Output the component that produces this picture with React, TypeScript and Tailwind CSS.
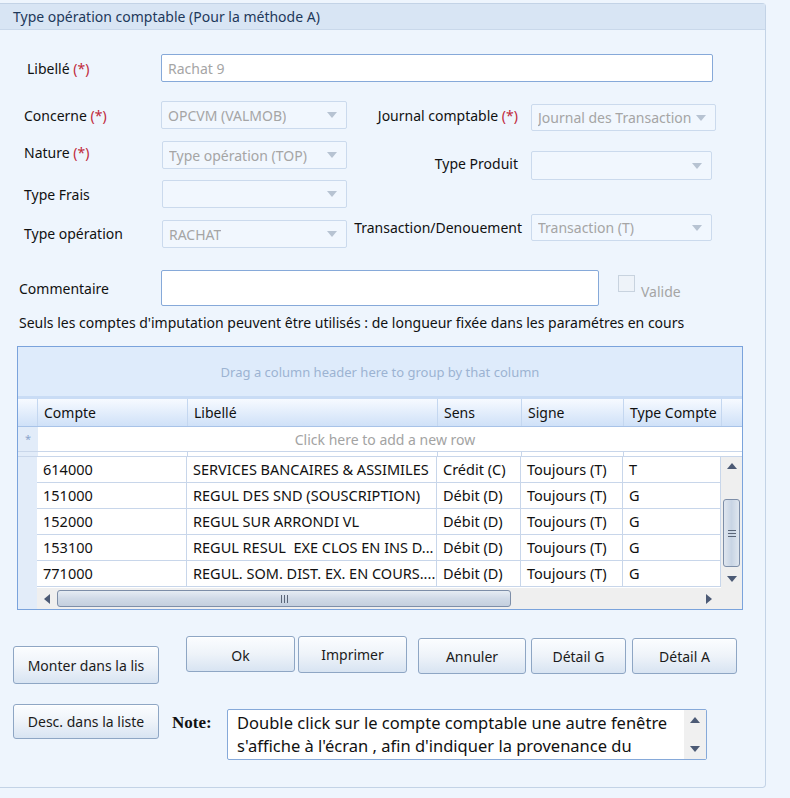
import React from 'react'

const font = { fontFamily: '"Noto Sans", "Open Sans", sans-serif' }

function Arrow({ dir, className }: { dir: 'up' | 'down' | 'left' | 'right'; className?: string }) {
  const pts = {
    up: '0,6 5,0 10,6',
    down: '0,0 10,0 5,6',
    left: '6,0 6,10 0,5',
    right: '0,0 6,5 0,10',
  }[dir]
  const vb = dir === 'up' || dir === 'down' ? '0 0 10 6' : '0 0 6 10'
  const size = dir === 'up' || dir === 'down' ? 'w-[10px] h-[6px]' : 'w-[6px] h-[10px]'
  return (
    <svg viewBox={vb} className={`${size} ${className ?? ''}`}>
      <polygon points={pts} fill="currentColor" />
    </svg>
  )
}

function Select({ value, className }: { value?: string; className: string }) {
  return (
    <div
      className={`flex items-center justify-between rounded-[2px] border border-[#cbdaed] bg-[#f1f7fe] pl-[6px] pr-[9px] text-[14px] text-[#a5a5a5] ${className}`}
    >
      <span className="truncate">{value}</span>
      <Arrow dir="down" className="w-[9px] h-[5px] text-[#b7c3d2] shrink-0" />
    </div>
  )
}

function Req() {
  return <span className="text-[#c0283a]"> (*)</span>
}

function Btn({ label, className }: { label: string; className: string }) {
  return (
    <button
      className={`relative flex items-center justify-center rounded-[3px] border border-[#8ea6c4] bg-gradient-to-b from-[#fbfdff] via-[#eef3f9] to-[#d8e4f2] text-[14px] text-[#1b1b1b] shadow-[inset_0_1px_0_#ffffff] ${className}`}
    >
      {label}
    </button>
  )
}

const cols = [
  { name: 'Compte', w: 'w-[150px]' },
  { name: 'Libellé', w: 'w-[250px]' },
  { name: 'Sens', w: 'w-[84px]' },
  { name: 'Signe', w: 'w-[102px]' },
  { name: 'Type Compte', w: 'w-[98px]' },
]

const rows = [
  ['614000', 'SERVICES BANCAIRES & ASSIMILES', 'Crédit (C)', 'Toujours (T)', 'T'],
  ['151000', 'REGUL DES SND (SOUSCRIPTION)', 'Débit (D)', 'Toujours (T)', 'G'],
  ['152000', 'REGUL SUR ARRONDI VL', 'Débit (D)', 'Toujours (T)', 'G'],
  ['153100', 'REGUL RESUL  EXE CLOS EN INS D...', 'Débit (D)', 'Toujours (T)', 'G'],
  ['771000', 'REGUL. SOM. DIST. EX. EN COURS....', 'Débit (D)', 'Toujours (T)', 'G'],
]

function Grid() {
  return (
    <div className="ml-[17px] mt-[13px] flex h-[264px] w-[726px] flex-col border border-[#7aa3dc] bg-white">
      <div className="flex h-[52px] shrink-0 items-center justify-center border-b-[3px] border-[#c9dcf5] bg-[#deebfb] pt-[2px] text-[13px] text-[#9cb3d2]">
        Drag a column header here to group by that column
      </div>
      <div className="flex h-[28px] shrink-0 border-b border-[#a8c3e8] bg-gradient-to-b from-[#f7faff] to-[#cfe1f8] text-[14px] text-[#111]">
        <div className="w-[20px] border-r border-[#c4d7f0]" />
        {cols.map((c) => (
          <div key={c.name} className={`${c.w} flex items-center border-r border-[#c4d7f0] pl-[6px]`}>
            {c.name}
          </div>
        ))}
      </div>
      <div className="flex h-[25px] shrink-0 border-b border-[#c8d6ea]">
        <div className="flex w-[20px] items-center justify-center bg-[#e2ecf9] text-[11px] text-[#8aa4cc]">*</div>
        <div className="flex flex-1 items-center justify-center pr-[10px] text-[14px] text-[#a3a3a3]">
          Click here to add a new row
        </div>
      </div>
      <div className="flex h-[5px] shrink-0 border-b border-[#c8d6ea]">
        <div className="w-[20px] bg-[#e2ecf9]" />
        <div className="w-[150px] border-r border-[#c8d6ea]" />
        <div className="w-[250px] border-r border-[#c8d6ea]" />
        <div className="w-[84px] border-r border-[#c8d6ea]" />
        <div className="w-[102px] border-r border-[#c8d6ea]" />
      </div>
      <div className="flex flex-1">
        <div className="w-[20px] bg-[#e2ecf9]" />
        <div className="flex flex-1 flex-col">
          <div className="flex flex-1">
            <div className="flex w-[684px] flex-col">
              {rows.map((r) => (
                <div key={r[0]} className="flex h-[26px] border-b border-[#c8d6ea] text-[14.5px] text-[#111]">
                  {r.map((v, i) => (
                    <div
                      key={i}
                      className={`${cols[i].w} flex items-center overflow-hidden whitespace-pre border-r border-[#c8d6ea] pl-[6px]`}
                    >
                      {v}
                    </div>
                  ))}
                </div>
              ))}
            </div>
            <div className="flex w-[21px] flex-col items-center bg-[#efefef] py-[6px]">
              <Arrow dir="up" className="text-[#4c5a75]" />
              <div className="mt-[30px] flex h-[68px] w-[17px] items-center justify-center rounded-[3px] border border-[#7d8ea8] bg-gradient-to-r from-[#dfe6ef] via-[#c8d4e4] to-[#dfe6ef]">
                <div className="flex flex-col gap-[2px]">
                  <div className="h-px w-[8px] bg-[#5b6678]" />
                  <div className="h-px w-[8px] bg-[#5b6678]" />
                  <div className="h-px w-[8px] bg-[#5b6678]" />
                </div>
              </div>
              <div className="flex-1" />
              <Arrow dir="down" className="text-[#4c5a75]" />
            </div>
          </div>
          <div className="flex h-[21px] shrink-0 items-center bg-[#efefef]">
            <Arrow dir="left" className="ml-[7px] text-[#4c5a75]" />
            <div className="ml-[7px] flex h-[17px] w-[454px] items-center justify-center rounded-[3px] border border-[#7d8ea8] bg-gradient-to-b from-[#e6ecf3] via-[#d0dae7] to-[#c4cfde]">
              <div className="flex gap-[2px]">
                <div className="h-[8px] w-px bg-[#5b6678]" />
                <div className="h-[8px] w-px bg-[#5b6678]" />
                <div className="h-[8px] w-px bg-[#5b6678]" />
              </div>
            </div>
            <div className="flex-1" />
            <Arrow dir="right" className="mr-[30px] text-[#4c5a75]" />
          </div>
        </div>
      </div>
    </div>
  )
}

export default function App() {
  return (
    <div className="h-[798px] w-[790px] bg-[#eef5fd] pt-[3px] text-[#111]" style={font}>
      <div className="h-[785px] w-[766px] rounded-r-[4px] border border-l-0 border-[#c3d3e6] bg-[#eef5fd]">
        <div className="flex h-[26px] items-center border-b border-[#c9d8ea] bg-[#d8e5f4] pl-[13px] text-[14px] text-[#1e395b]">
          Type opération comptable (Pour la méthode A)
        </div>

        <div className="ml-[27px] mt-[24px] flex items-center">
          <div className="w-[134px] text-[14px]">
            Libellé<Req />
          </div>
          <div className="flex h-[28px] w-[552px] items-center rounded-[2px] border border-[#86a9d9] bg-white pl-[6px] text-[14px] text-[#a5a5a5]">
            Rachat 9
          </div>
        </div>

        <div className="mt-[19px] flex">
          <div className="ml-[24px] flex w-[323px] flex-col">
            <div className="flex items-center">
              <div className="w-[137px] text-[14px]">
                Concerne<Req />
              </div>
              <Select value="OPCVM (VALMOB)" className="h-[28px] w-[186px]" />
            </div>
            <div className="mt-[12px] flex items-center">
              <div className="w-[138px] -translate-y-[3px] text-[14px]">
                Nature<Req />
              </div>
              <Select value="Type opération (TOP)" className="h-[28px] w-[185px]" />
            </div>
            <div className="mt-[11px] flex items-center">
              <div className="w-[138px] text-[14px]">Type Frais</div>
              <Select className="h-[28px] w-[185px]" />
            </div>
            <div className="mt-[12px] flex items-center">
              <div className="w-[138px] -translate-y-[1px] text-[14px]">Type opération</div>
              <Select value="RACHAT" className="h-[28px] w-[185px]" />
            </div>
          </div>
          <div className="ml-[5px] flex flex-col">
            <div className="mt-[3px] flex items-center">
              <div className="w-[179px] -translate-y-[2px] pr-[13px] text-right text-[14px]">
                Journal comptable<Req />
              </div>
              <Select value="Journal des Transaction" className="h-[27px] w-[185px]" />
            </div>
            <div className="mt-[20px] flex items-center">
              <div className="w-[179px] -translate-y-[2px] pr-[13px] text-right text-[14px]">Type Produit</div>
              <Select className="h-[29px] w-[181px]" />
            </div>
            <div className="mt-[34px] flex items-center">
              <div className="w-[179px] pr-[9px] text-right text-[14px]">Transaction/Denouement</div>
              <Select value="Transaction (T)" className="h-[27px] w-[181px]" />
            </div>
          </div>
        </div>

        <div className="ml-[19px] mt-[22px] flex items-center">
          <div className="w-[142px] text-[14px]">Commentaire</div>
          <div className="h-[36px] w-[438px] rounded-[2px] border border-[#86a9d9] bg-white" />
          <div className="ml-[19px] -mt-[10px] h-[17px] w-[17px] border border-[#c8d3df] bg-[#eef3f9]" />
          <div className="ml-[6px] mt-[6px] text-[14px] text-[#a5a5a5]">Valide</div>
        </div>

        <div className="ml-[19px] mt-[7px] text-[14px] leading-[20px]">
          Seuls les comptes d'imputation peuvent être utilisés : de longueur fixée dans les paramétres en cours
        </div>

        <Grid />

        <div className="flex">
          <div className="ml-[13px] flex w-[146px] flex-col">
            <Btn label="Monter dans la lis" className="mt-[36px] h-[38px] w-[146px]" />
            <Btn label="Desc. dans la liste" className="mt-[20px] h-[35px] w-[146px]" />
          </div>
          <div className="ml-[13px] flex flex-col">
            <div className="ml-[14px] mt-[26px] flex items-start">
              <Btn label="Ok" className="h-[36px] w-[109px] items-start pt-[8px]" />
              <Btn label="Imprimer" className="ml-[3px] h-[37px] w-[109px]" />
              <Btn label="Annuler" className="ml-[11px] mt-[2px] h-[36px] w-[108px]" />
              <Btn label="Détail G" className="ml-[5px] mt-[2px] h-[36px] w-[95px]" />
              <Btn label="Détail A" className="ml-[6px] mt-[2px] h-[36px] w-[105px]" />
            </div>
            <div className="mt-[35px] flex items-start">
              <div
                className="mt-[1px] w-[55px] text-[17px] font-bold"
                style={{ fontFamily: '"Liberation Serif", "DejaVu Serif", serif' }}
              >
                Note:
              </div>
              <div className="flex h-[51px] w-[480px] rounded-[2px] border border-[#86a9d9] bg-white">
                <div className="flex-1 pl-[9px] pt-[1px] text-[16.5px] leading-[23px] text-[#111]">
                  Double click sur le compte comptable une autre fenêtre s'affiche à l'écran , afin d'indiquer la provenance du
                </div>
                <div className="flex w-[22px] flex-col items-center justify-between bg-[#f0f0f0] py-[7px]">
                  <Arrow dir="up" className="text-[#4c5a75]" />
                  <Arrow dir="down" className="text-[#4c5a75]" />
                </div>
              </div>
            </div>
          </div>
        </div>
      </div>
    </div>
  )
}
